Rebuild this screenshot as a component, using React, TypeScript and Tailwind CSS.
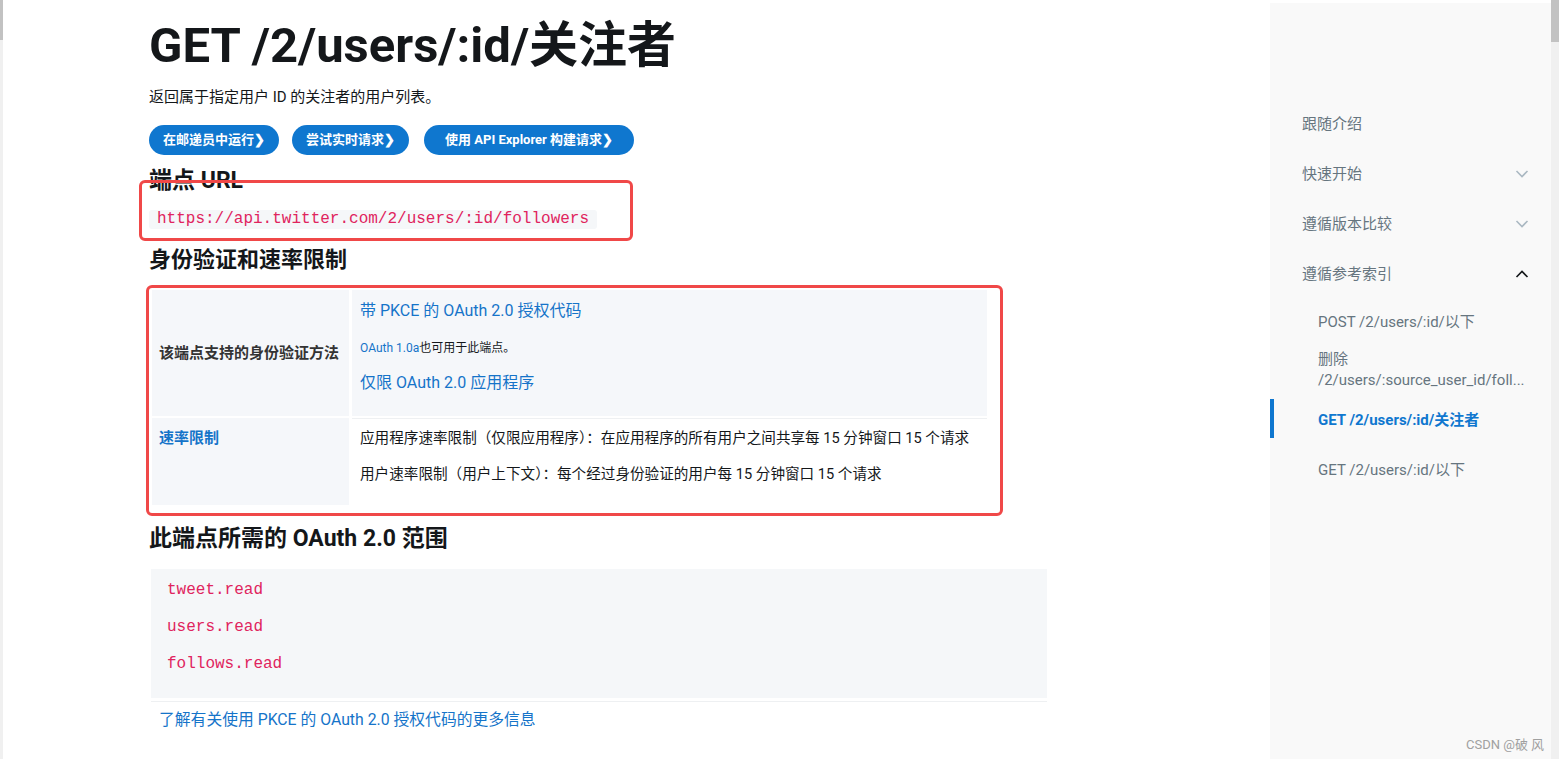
import React from "react";

const FONT = "Roboto, 'Noto Sans CJK SC', sans-serif";
const MONO = "'Liberation Mono', 'DejaVu Sans Mono', monospace";

function Chevron({ up, dark }: { up?: boolean; dark?: boolean }) {
  return (
    <svg width="14" height="8" viewBox="0 0 14 8" className="shrink-0">
      <polyline
        points={up ? "1.5,7 7,1.5 12.5,7" : "1.5,1 7,6.5 12.5,1"}
        fill="none"
        stroke={dark ? "#14171a" : "#aab8c2"}
        strokeWidth="1.6"
      />
    </svg>
  );
}

export default function App() {
  return (
    <div
      className="relative flex h-[759px] w-[1559px] overflow-hidden bg-white text-[#14171a]"
      style={{ fontFamily: FONT }}
    >
      {/* left strip */}
      <div className="flex w-[3px] flex-col bg-[#f0f0f0]">
        <div className="h-[40px] bg-[#c2c2c2]" />
      </div>

      {/* main */}
      <div className="flex-1 pl-[146px]">
        <h1 className="mt-[18px] text-[49px] font-bold leading-[56px]">GET /2/users/:id/关注者</h1>
        <p className="mt-[13px] text-[15px] leading-[20px]">返回属于指定用户 ID 的关注者的用户列表。</p>
        <div className="mt-[18px] flex">
          <span className="flex h-[30px] items-center rounded-full bg-[#0f77cf] px-[14px] text-[13px] font-bold text-white">
            在邮递员中运行❯
          </span>
          <span className="ml-[13px] flex h-[30px] items-center rounded-full bg-[#0f77cf] px-[14px] text-[13px] font-bold text-white">
            尝试实时请求❯
          </span>
          <span className="ml-[15px] flex h-[30px] items-center rounded-full bg-[#0f77cf] px-[21px] text-[13px] font-bold text-white">
            使用 API Explorer 构建请求❯
          </span>
        </div>
        <h2 className="mt-[12px] text-[23px] font-bold leading-[28px]">端点 URL</h2>
        <div className="mt-[15px] flex">
          <code
            className="rounded-[3px] bg-[#f5f7f9] px-[8px] text-[16px] leading-[19px] text-[#e0245e]"
            style={{ fontFamily: MONO }}
          >
            https://api.twitter.com/2/users/:id/followers
          </code>
        </div>
        <h2 className="mt-[17px] text-[22px] font-semibold leading-[28px]">身份验证和速率限制</h2>

        <div className="mt-[16px] ml-[3px] grid w-[835px] grid-cols-[197px_635px] gap-x-[3px] gap-y-[2px]">
          <div className="flex h-[126px] items-center bg-[#f5f7fa] px-[7px] text-[15px] font-bold text-[#333]">
            该端点支持的身份验证方法
          </div>
          <div className="flex h-[126px] flex-col bg-[#f5f7fa] px-[8px] pt-[10px]">
            <span className="text-[16px] leading-[22px] text-[#1574c9]">带 PKCE 的 OAuth 2.0 授权代码</span>
            <span className="mt-[19px] text-[12px] leading-[14px]">
              <span className="text-[#1574c9]">OAuth 1.0a</span>
              <span className="text-[#14171a]">也可用于此端点。</span>
            </span>
            <span className="mt-[17px] text-[16px] leading-[22px] text-[#1574c9]">仅限 OAuth 2.0 应用程序</span>
          </div>
          <div className="h-[87px] bg-[#f5f7fa] px-[7px] pt-[10px] text-[15px] font-bold leading-[20px] text-[#1574c9]">
            速率限制
          </div>
          <div className="h-[87px] border-t border-[#eef0f2] px-[8px] pt-[9px] text-[14.6px] leading-[20px] whitespace-nowrap text-[#14171a]">
            <p>应用程序速率限制（仅限应用程序）：在应用程序的所有用户之间共享每 15 分钟窗口 15 个请求</p>
            <p className="mt-[16px]">用户速率限制（用户上下文）：每个经过身份验证的用户每 15 分钟窗口 15 个请求</p>
          </div>
        </div>

        <h2 className="mt-[20px] text-[23px] font-bold leading-[28px]">此端点所需的 OAuth 2.0 范围</h2>
        <div
          className="mt-[16px] ml-[2px] w-[896px] bg-[#f5f7f9] px-[16px] pt-[3px] pb-[15px] text-[16px] leading-[37px] text-[#e0245e]"
          style={{ fontFamily: MONO }}
        >
          <p>tweet.read</p>
          <p>users.read</p>
          <p>follows.read</p>
        </div>
        <div className="ml-[2px] mt-[3px] h-px w-[896px] bg-[#eef0f2]" />
        <p className="mt-[8px] ml-[10px] text-[15.8px] leading-[20px] text-[#1574c9]">
          了解有关使用 PKCE 的 OAuth 2.0 授权代码的更多信息
        </p>
      </div>

      {/* sidebar */}
      <div className="mt-[3px] w-[281px] bg-[#f9f9f9] pt-[96px] text-[15px] text-[#66757f]">
        <div className="flex h-[50px] items-center pl-[32px] pr-[22px]">跟随介绍</div>
        <div className="flex h-[50px] items-center justify-between pl-[32px] pr-[22px]">
          <span>快速开始</span>
          <Chevron />
        </div>
        <div className="flex h-[50px] items-center justify-between pl-[32px] pr-[22px]">
          <span>遵循版本比较</span>
          <Chevron />
        </div>
        <div className="flex h-[50px] items-center justify-between pl-[32px] pr-[22px]">
          <span>遵循参考索引</span>
          <Chevron up dark />
        </div>
        <div className="flex h-[46px] items-center pl-[48px] pr-[22px]">POST /2/users/:id/以下</div>
        <div className="flex h-[50px] flex-col justify-center pl-[48px] pr-[22px] leading-[21px]">
          <span>删除</span>
          <span>/2/users/:source_user_id/foll...</span>
        </div>
        <div className="relative flex h-[50px] items-center pl-[48px] pr-[22px] font-bold text-[#0f77cf]">
          <div className="absolute left-0 top-[4px] h-[39px] w-[4px] bg-[#0f77cf]" />
          GET /2/users/:id/关注者
        </div>
        <div className="flex h-[50px] items-center pl-[48px] pr-[22px]">GET /2/users/:id/以下</div>
      </div>

      {/* scrollbar */}
      <div className="flex w-[8px] flex-col bg-[#f0f0f0]">
        <div className="h-[42px] bg-[#c2c2c2]" />
      </div>

      {/* annotation boxes */}
      <div className="pointer-events-none absolute left-[139px] top-[180px] h-[61px] w-[494px] rounded-[6px] border-[3px] border-[#f04848]" />
      <div className="pointer-events-none absolute left-[146px] top-[285px] h-[231px] w-[857px] rounded-[6px] border-[3px] border-[#f04848]" />

      <span className="absolute left-[1466px] top-[735px] text-[13px] text-[#a0a0a0]">CSDN @破 风</span>
    </div>
  );
}
